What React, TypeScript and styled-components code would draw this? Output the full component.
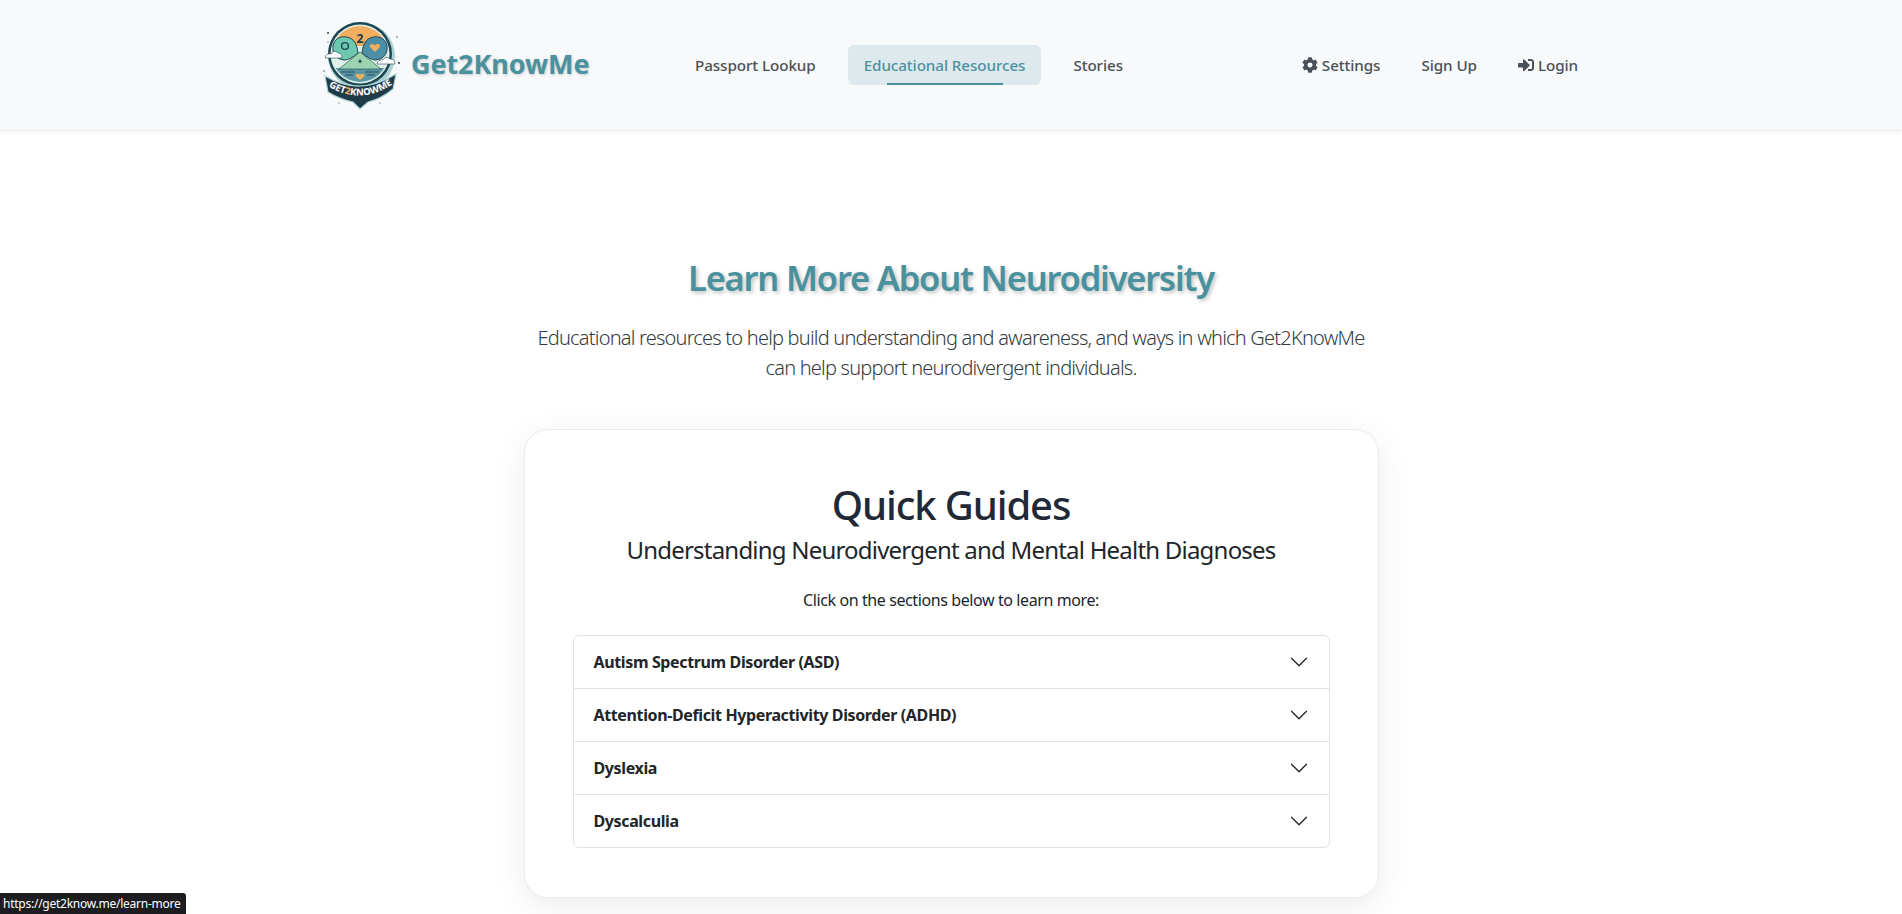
import React from 'react'
import styled, { createGlobalStyle } from 'styled-components'
import { FaCog, FaSignInAlt } from 'react-icons/fa'

const teal = '#4a919e'
const uiFont = `"Noto Sans", "Open Sans", "Liberation Sans", sans-serif`

const GlobalStyle = createGlobalStyle`
  html, body {
    margin: 0;
    height: 914px;
    overflow: hidden;
    background: #fff;
    font-family: ${uiFont};
    color: #212529;
  }
`

const Navbar = styled.nav`
  height: 130px;
  background: #f8f9fa;
  border-bottom: 1px solid #ebedef;
  box-shadow: 0 2px 4px rgba(0, 0, 0, 0.05);
  display: flex;
  justify-content: center;
`

const NavInner = styled.div`
  width: 1320px;
  padding: 0 17px 0 24px;
  box-sizing: border-box;
  display: flex;
  align-items: center;
`

const Brand = styled.a`
  display: flex;
  align-items: center;
  gap: 6px;
  width: 364px;
`

const BrandName = styled.span`
  margin-top: -4px;
  font-size: 27px;
  font-weight: 700;
  letter-spacing: -0.09px;
  color: ${teal};
  text-shadow: 1px 1px 3px rgba(0, 0, 0, 0.2);
`

const NavGroup = styled.div`
  display: flex;
  align-items: center;
  gap: 16px;
`

const RightGroup = styled(NavGroup)`
  margin-left: auto;
  gap: 9px;
`

const NavLink = styled.a<{ $active?: boolean }>`
  position: relative;
  display: flex;
  align-items: center;
  gap: 4px;
  height: 40px;
  padding: 0 16px;
  border-radius: 6px;
  font-size: 15.2px;
  font-weight: 500;
  letter-spacing: -0.07px;
  white-space: nowrap;
  color: ${props => (props.$active ? teal : '#495057')};
  background: ${props => (props.$active ? '#dee9ed' : 'transparent')};

  &::after {
    content: '';
    display: ${props => (props.$active ? 'block' : 'none')};
    position: absolute;
    left: 39px;
    right: 38px;
    bottom: 0;
    height: 2px;
    background: ${teal};
  }
`

const Main = styled.main`
  display: flex;
  flex-direction: column;
  align-items: center;
  padding-top: 124px;
`

const PageTitle = styled.h1`
  margin: 0;
  font-size: 34.5px;
  line-height: 46px;
  font-weight: 600;
  letter-spacing: -1.2px;
  color: ${teal};
  text-shadow: 2px 2px 4px rgba(0, 0, 0, 0.25);
`

const Lead = styled.p`
  margin: 22px 0 0;
  font-size: 20px;
  line-height: 30px;
  font-weight: 300;
  letter-spacing: -0.79px;
  text-align: center;
  white-space: nowrap;
  color: #343a40;
`

const Card = styled.section`
  width: 855px;
  box-sizing: border-box;
  margin-top: 46px;
  padding: 51px 48px 49px;
  background: #fff;
  border: 1px solid #e9ecef;
  border-radius: 24px;
  box-shadow: 0 8px 32px rgba(0, 0, 0, 0.08);
  text-align: center;
`

const CardTitle = styled.h2`
  margin: 0;
  font-size: 40px;
  line-height: 48px;
  font-weight: 500;
  letter-spacing: -1.1px;
  color: #1f2937;
`

const CardSubtitle = styled.h3`
  margin: 3px 0 0;
  font-size: 24px;
  line-height: 36px;
  font-weight: 400;
  letter-spacing: -0.79px;
  color: #212529;
`

const Hint = styled.p`
  margin: 20px 0 0;
  font-size: 16px;
  line-height: 24px;
  letter-spacing: -0.4px;
`

const Accordion = styled.div`
  margin-top: 23px;
  border: 1px solid #dee2e6;
  border-radius: 6px;
  text-align: left;
`

const AccordionRow = styled.div`
  height: 52px;
  padding: 0 20px;
  display: flex;
  align-items: center;
  justify-content: space-between;
  font-size: 16px;
  font-weight: 700;
  letter-spacing: -0.37px;
  color: #212529;

  & + & {
    border-top: 1px solid #dee2e6;
  }
`

const Chevron = styled.svg`
  width: 20px;
  height: 20px;
  fill: #212529;
`

const StatusBar = styled.div`
  position: fixed;
  left: 0;
  bottom: 0;
  height: 21px;
  padding: 0 6px 0 3px;
  display: flex;
  align-items: center;
  background: #1c1c21;
  border-top-right-radius: 3px;
  font-size: 12px;
  letter-spacing: -0.25px;
  color: #fff;
`

const guides = [
  'Autism Spectrum Disorder (ASD)',
  'Attention-Deficit Hyperactivity Disorder (ADHD)',
  'Dyslexia',
  'Dyscalculia',
]

const Logo = () => (
  <svg width="90" height="100" viewBox="0 0 90 100" aria-label="Get2KnowMe logo">
    <defs>
      <clipPath id="disc">
        <circle cx="45" cy="39" r="28" />
      </clipPath>
      <path id="banner-curve" d="M13 71 Q45 91 78 69" />
    </defs>
    <circle cx="46.5" cy="41" r="33.5" fill="#a9d3d3" />
    <circle cx="45" cy="39" r="32" fill="#1f4653" />
    <circle cx="45" cy="39" r="29.5" fill="#dff0e9" />
    <g clipPath="url(#disc)">
      <rect x="10" y="5" width="70" height="26" fill="#f0ae5e" />
      <rect x="10" y="53" width="70" height="20" fill="#5b97a5" />
      <path d="M24 54 L45 37 L66 54 Z" fill="#9dd4b0" stroke="#1f4653" strokeWidth="0.6" />
      <path d="M26 57 H40 M50 57 H64 M30 60 H38 M52 60 H60" stroke="#1f4653" strokeWidth="0.9" />
    </g>
    <path d="M43 38 C38 42 34 45 29 45 C21 44 17 38 18 31 C19 24 25 21 31 22 C39 23 42 29 43 38 Z" fill="#6cc8ae" stroke="#1f4653" strokeWidth="1" />
    <path d="M47 38 C52 42 56 45 61 45 C69 44 73 38 72 31 C71 24 65 21 59 22 C51 23 48 29 47 38 Z" fill="#4c8ea6" stroke="#1f4653" strokeWidth="1" />
    <circle cx="30" cy="31" r="3.4" fill="none" stroke="#1f4653" strokeWidth="1.4" />
    <path d="M60 37 L55.5 32.5 C53.5 30 56.8 27.5 60 30.3 C63.2 27.5 66.5 30 64.5 32.5 Z" fill="#f0ae5e" />
    <text x="45" y="28" textAnchor="middle" fontSize="12" fontWeight="700" fill="#1f3a48" fontFamily={uiFont}>2</text>
    <path d="M45 65 L41 61.5 C39.5 59.5 42.6 57.5 45 59.6 C47.4 57.5 50.5 59.5 49 61.5 Z" fill="#f0ae5e" />
    <path d="M10 43 Q11 38 16 39 Q19 34 23 38 Q27 38 27 43 Z" fill="#fff" stroke="#1f4653" strokeWidth="0.6" />
    <path d="M62 49 Q63 44 68 45 Q71 40 75 44 Q80 44 80 49 Z" fill="#fff" stroke="#1f4653" strokeWidth="0.6" />
    <path d="M45 49 L44.3 47 L42.5 46.3 L44.3 45.6 L45 43.6 L45.7 45.6 L47.5 46.3 L45.7 47 Z" fill="#1f4653" />
    <path d="M10 61 Q45 82 81 59 L78 74 Q66 84 53 87 L45 94 L38 87 Q24 84 13 77 Z" fill="#1f3a48" stroke="#a9d3d3" strokeWidth="1.2" />
    <text fontSize="9.5" fontWeight="800" fill="#f4f6f5" fontFamily={uiFont} letterSpacing="-0.1">
      <textPath href="#banner-curve" startOffset="50%" textAnchor="middle">
        GET<tspan fill="#f0ae5e">2</tspan>KNOWME
      </textPath>
    </text>
    <circle cx="13" cy="18" r="0.9" fill="#1f3a48" />
    <circle cx="13" cy="27" r="0.6" fill="#1f3a48" />
    <circle cx="82" cy="22" r="0.7" fill="#1f3a48" />
    <circle cx="84" cy="48" r="1" fill="#1f3a48" />
    <circle cx="9" cy="56" r="0.7" fill="#1f3a48" />
    <circle cx="65" cy="88" r="0.6" fill="#1f3a48" />
    <circle cx="24" cy="88" r="0.6" fill="#1f3a48" />
  </svg>
)

const App = () => (
  <>
    <GlobalStyle />
    <Navbar>
      <NavInner>
        <Brand>
          <Logo />
          <BrandName>Get2KnowMe</BrandName>
        </Brand>
        <NavGroup>
          <NavLink>Passport Lookup</NavLink>
          <NavLink $active>Educational Resources</NavLink>
          <NavLink>Stories</NavLink>
        </NavGroup>
        <RightGroup>
          <NavLink><FaCog size={16} /> Settings</NavLink>
          <NavLink>Sign Up</NavLink>
          <NavLink><FaSignInAlt size={16} /> Login</NavLink>
        </RightGroup>
      </NavInner>
    </Navbar>
    <Main>
      <PageTitle>Learn More About Neurodiversity</PageTitle>
      <Lead>
        Educational resources to help build understanding and awareness, and ways in which Get2KnowMe
        <br />
        can help support neurodivergent individuals.
      </Lead>
      <Card>
        <CardTitle>Quick Guides</CardTitle>
        <CardSubtitle>Understanding Neurodivergent and Mental Health Diagnoses</CardSubtitle>
        <Hint>Click on the sections below to learn more:</Hint>
        <Accordion>
          {guides.map(name => (
            <AccordionRow key={name}>
              {name}
              <Chevron viewBox="0 0 16 16">
                <path fillRule="evenodd" d="M1.646 4.646a.5.5 0 0 1 .708 0L8 10.293l5.646-5.647a.5.5 0 0 1 .708.708l-6 6a.5.5 0 0 1-.708 0l-6-6a.5.5 0 0 1 0-.708z" />
              </Chevron>
            </AccordionRow>
          ))}
        </Accordion>
      </Card>
    </Main>
    <StatusBar>https://get2know.me/learn-more</StatusBar>
  </>
)

export default App
